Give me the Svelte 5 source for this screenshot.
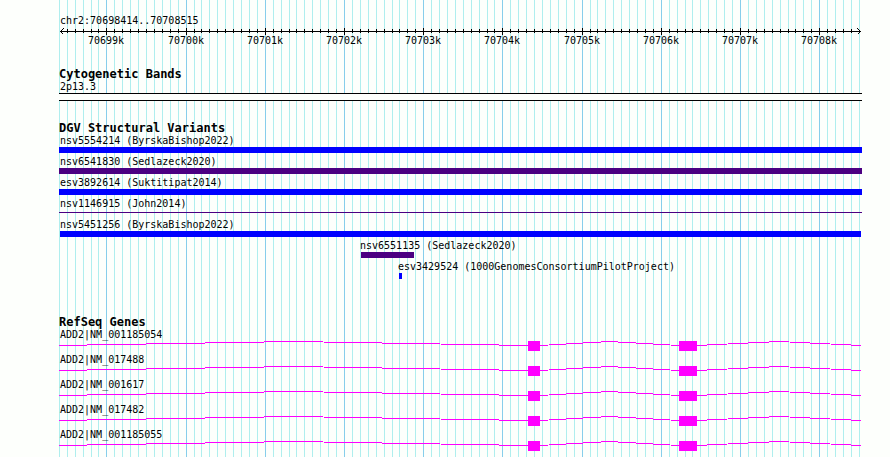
<script>
	const start = 70698414;
	const end = 70708515;

	const variants = [
		{ name: 'nsv5554214 (ByrskaBishop2022)', from: 70698000, to: 70709000, color: 'blue' },
		{ name: 'nsv6541830 (Sedlazeck2020)', from: 70698000, to: 70709000, color: 'indigo' },
		{ name: 'esv3892614 (Suktitipat2014)', from: 70698000, to: 70709000, color: 'blue' },
		{ name: 'nsv1146915 (John2014)', from: 70698000, to: 70709000, color: 'indigo', thin: true },
		{ name: 'nsv5451256 (ByrskaBishop2022)', from: start, to: end + 12, color: 'blue' },
		{ name: 'nsv6551135 (Sedlazeck2020)', from: 70702215, to: 70702884, color: 'indigo' },
		{ name: 'esv3429524 (1000GenomesConsortiumPilotProject)', from: 70702694, to: 70702732, color: 'blue' }
	];

	const genes = [
		'ADD2|NM_001185054',
		'ADD2|NM_017488',
		'ADD2|NM_001617',
		'ADD2|NM_017482',
		'ADD2|NM_001185055'
	];

	const exons = [
		[70704323, 70704475],
		[70706230, 70706457]
	];

	let width = $state(803);

	// base position -> pixel in the panel, cut off at the panel edges
	function x(bp) {
		const px = Math.round(1 + ((bp - start) / (end - start)) * (width - 3));
		return Math.max(0, Math.min(width, px));
	}

	const ticks = [];
	for (let bp = Math.floor(start / 100) * 100; bp <= end; bp += 100) {
		ticks.push({ bp, major: bp % 1000 === 0 });
	}

	function labelLeft(bp) {
		return Math.max(1, x(bp) - 1);
	}

	// each intron is drawn as a low hat between two exons
	let introns = $derived.by(() => {
		const edges = [0, ...exons.flat().map(x), width - 1];
		let points = [];
		for (let i = 0; i < edges.length; i += 2) {
			const a = edges[i];
			const b = edges[i + 1];
			points.push(`${a},4.5 ${(a + b) / 2},0.5 ${b},4.5`);
		}
		return points;
	});
</script>

<main class="panel" bind:clientWidth={width}>
	<svg class="grid" aria-hidden="true">
		{#each ticks as tick}
			<rect class:major={tick.major} x={x(tick.bp)} y="0" width="1" height="100%" />
		{/each}
	</svg>

	<header>
		<div class="label first">chr2:70698414..70708515</div>
		<svg class="ruler" aria-hidden="true">
			<rect x="1" y="4" width={width - 2} height="1" />
			{#each ticks as tick}
				{#if tick.bp > start && x(tick.bp) < width - 4}
					<rect x={x(tick.bp)} y={tick.major ? 1 : 2} width="1" height={tick.major ? 7 : 4} />
				{/if}
			{/each}
			<path d="M4.5 1.5 L1.5 4.5 L4.5 7.5" />
			<path d="M{width - 4.5} 1.5 L{width - 1.5} 4.5 L{width - 4.5} 7.5" />
		</svg>
		<div class="scale">
			{#each ticks.filter((t) => t.major) as tick}
				<span style:left="{x(tick.bp)}px">{tick.bp / 1000}k</span>
			{/each}
		</div>
	</header>

	<section class="bands">
		<h2>Cytogenetic Bands</h2>
		<div class="label">2p13.3</div>
		<div class="band"></div>
	</section>

	<section class="variants">
		<h2>DGV Structural Variants</h2>
		{#each variants as v}
			<div class="feature">
				<div class="label" style:padding-left="{labelLeft(v.from)}px">{v.name}</div>
				<div
					class="bar {v.color}"
					class:thin={v.thin}
					style:margin-left="{x(v.from)}px"
					style:width="{x(v.to) - x(v.from)}px"
				></div>
			</div>
		{/each}
	</section>

	<section class="genes">
		<h2>RefSeq Genes</h2>
		{#each genes as gene}
			<div class="feature">
				<div class="label">{gene}</div>
				<svg class="transcript" aria-hidden="true">
					{#each introns as points}
						<polyline {points} />
					{/each}
					{#each exons as exon}
						<rect x={x(exon[0])} y="0" width={x(exon[1]) - x(exon[0])} height="10" />
					{/each}
				</svg>
			</div>
		{/each}
	</section>
</main>

<style>
	:global(body) {
		background: #fdfffc;
		overflow: hidden;
	}

	.panel {
		position: relative;
		box-sizing: border-box;
		min-height: 100vh;
		margin: 0 28px 0 59px;
		padding-top: 14px;
		color: black;
		font-family: 'DejaVu Sans Mono', 'Liberation Mono', monospace;
		font-size: 10px;
		white-space: nowrap;
	}

	svg {
		display: block;
		width: 100%;
		shape-rendering: crispEdges;
	}

	.grid {
		position: absolute;
		top: 0;
		left: 0;
		height: 100%;
		z-index: -1;
		fill: #afeeee;
	}

	.grid .major {
		fill: #87ceeb;
	}

	h2 {
		margin: 0;
		font-size: 12px;
		line-height: 12px;
	}

	.label {
		padding-left: 1px;
		line-height: 13px;
	}

	.ruler {
		height: 8px;
	}

	.ruler path {
		fill: none;
		stroke: black;
	}

	.scale {
		position: relative;
		height: 12px;
	}

	.scale span {
		position: absolute;
		transform: translateX(-50%);
		line-height: 12px;
	}

	.bands {
		margin-top: 21px;
	}

	.band {
		height: 6px;
		border-top: 1px solid black;
		border-bottom: 1px solid black;
		background: #fdfffc;
	}

	.variants {
		margin-top: 21px;
	}

	.feature {
		padding-bottom: 2px;
	}

	.bar {
		height: 6px;
	}

	.bar.blue {
		background: #0000ff;
	}

	.bar.indigo {
		background: #4b0082;
	}

	.bar.thin {
		box-sizing: border-box;
		height: 6px;
		padding: 2px 0 3px;
		background-clip: content-box;
	}

	.genes {
		margin-top: 35px;
	}

	.transcript {
		height: 10px;
		fill: #ff00ff;
	}

	.transcript polyline {
		fill: none;
		stroke: #ff00ff;
	}
</style>
